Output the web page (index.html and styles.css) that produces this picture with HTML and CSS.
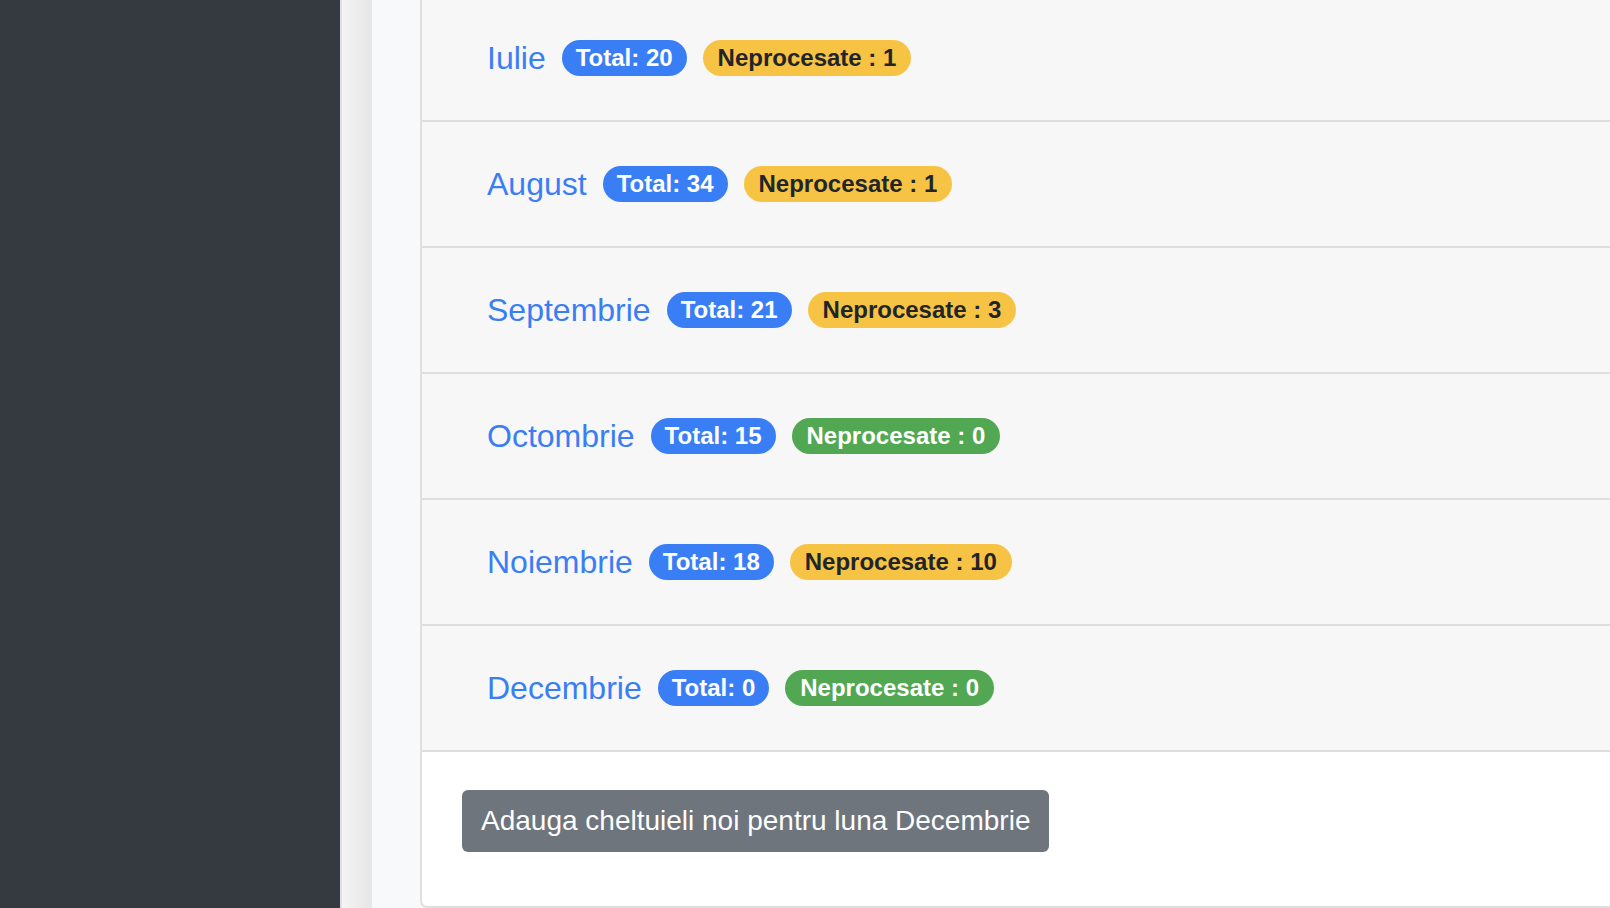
FILE: index.html
```html
<!DOCTYPE html>
<html lang="ro">
<head>
<meta charset="utf-8">
<title>Cheltuieli</title>
<link rel="stylesheet" href="styles.css">
</head>
<body>
<div class="layout">
  <aside class="sidebar"></aside>
  <div class="gutter"></div>
  <main class="content">
    <section class="card">
      <ul class="month-list">
        <li class="month-row"><a class="month-name" href="#">Iulie</a><span class="badge badge-blue">Total: 20</span><span class="badge badge-yellow">Neprocesate : 1</span></li>
        <li class="month-row"><a class="month-name" href="#">August</a><span class="badge badge-blue">Total: 34</span><span class="badge badge-yellow">Neprocesate : 1</span></li>
        <li class="month-row"><a class="month-name" href="#">Septembrie</a><span class="badge badge-blue">Total: 21</span><span class="badge badge-yellow">Neprocesate : 3</span></li>
        <li class="month-row"><a class="month-name" href="#">Octombrie</a><span class="badge badge-blue">Total: 15</span><span class="badge badge-green">Neprocesate : 0</span></li>
        <li class="month-row"><a class="month-name" href="#">Noiembrie</a><span class="badge badge-blue">Total: 18</span><span class="badge badge-yellow">Neprocesate : 10</span></li>
        <li class="month-row"><a class="month-name" href="#">Decembrie</a><span class="badge badge-blue">Total: 0</span><span class="badge badge-green">Neprocesate : 0</span></li>
      </ul>
      <div class="card-footer">
        <button class="btn-secondary" type="button">Adauga cheltuieli noi pentru luna Decembrie</button>
      </div>
    </section>
  </main>
</div>
</body>
</html>
```

FILE: styles.css
```css
* {
  box-sizing: border-box;
}

html, body {
  margin: 0;
  padding: 0;
  height: 100%;
  overflow: hidden;
}

body {
  font-family: "Liberation Sans", Arial, Helvetica, sans-serif;
  background: #f8f9fa;
}

.layout {
  display: flex;
  height: 908px;
}

.sidebar {
  width: 340px;
  flex: 0 0 340px;
  background: #343a40;
}

.gutter {
  width: 32px;
  flex: 0 0 32px;
  border-left: 2px solid #dedfe1;
  background: linear-gradient(to right, #f4f4f4, #e6e6e6);
}

.content {
  flex: 1;
  min-width: 0;
  background: #f8f9fa;
  padding-left: 48px;
  display: flex;
  flex-direction: column;
}

.card {
  margin-top: -6px;
  margin-right: -10px;
  background: #ffffff;
  border: 2px solid #dfdfdf;
  border-radius: 0 0 0 7px;
  display: flex;
  flex-direction: column;
}

.month-list {
  list-style: none;
  margin: 0;
  padding: 0;
}

.month-row {
  height: 126px;
  display: flex;
  align-items: center;
  padding-left: 65px;
  background: #f7f7f7;
  border-bottom: 2px solid #dedede;
}

.month-name {
  font-size: 32px;
  line-height: 1;
  color: #3a7ef4;
  text-decoration: none;
  margin-right: 16px;
}

.badge {
  display: inline-block;
  font-size: 24px;
  font-weight: 700;
  line-height: 1;
  padding: 6px 15px;
  border-radius: 50px;
  margin-right: 16px;
  white-space: nowrap;
}

.badge-blue {
  background: #3a7ef5;
  color: #ffffff;
  padding: 6px 14px;
}

.badge-yellow {
  background: #f7c344;
  color: #212529;
}

.badge-green {
  background: #52a752;
  color: #ffffff;
}

.card-footer {
  padding: 38px 40px 54px;
  background: #ffffff;
  border-radius: 0 0 0 7px;
}

.btn-secondary {
  font-family: "Liberation Sans", Arial, Helvetica, sans-serif;
  font-size: 28px;
  line-height: 42px;
  padding: 10px 19px;
  background: #6e757d;
  color: #ffffff;
  border: none;
  border-radius: 6px;
  cursor: pointer;
}
```
